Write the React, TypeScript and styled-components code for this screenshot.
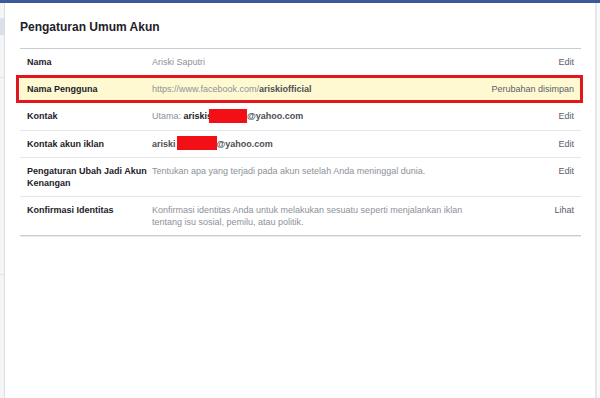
import React from "react";
import styled, { createGlobalStyle } from "styled-components";

const GlobalStyle = createGlobalStyle`
  html, body {
    margin: 0;
    padding: 0;
    background: #ffffff;
  }
  body {
    font-family: "Liberation Sans", Arial, sans-serif;
  }
`;

const Page = styled("div")`
  display: flex;
  flex-direction: column;
  height: 398px;
  overflow: hidden;
`;

const TopBar = styled("div")`
  height: 3px;
  background-color: #3d5a98;
  flex-shrink: 0;
`;

const Body = styled("div")`
  display: flex;
  flex: 1;
`;

const SideNav = styled("div")`
  width: 4px;
  background-color: #f4f5f7;
  border-right: 1px solid #dcdee2;
  display: flex;
  flex-direction: column;
`;

const SideNavItem = styled("div")<{ $active?: boolean; $height: number }>`
  height: ${(p) => p.$height}px;
  background-color: ${(p) => (p.$active ? "#d9dfeb" : "transparent")};
  border-bottom: 1px solid ${(p) => (p.$active ? "transparent" : "#e2e4e8")};
`;

const Main = styled("main")`
  flex: 1;
  padding: 16px 14px 0 15px;
  background-color: #ffffff;
  border-right: 2px solid #e6e7ea;
`;

const RightGutter = styled("div")`
  width: 3px;
  background-color: #f9f9fa;
`;

const Title = styled("h2")`
  margin: 0;
  font-size: 12px;
  line-height: 16px;
  font-weight: bold;
  color: #1d2129;
  padding-bottom: 13px;
  border-bottom: 1px solid #c9cbcf;
`;

const SettingsList = styled("ul")`
  list-style: none;
  margin: 0;
  padding: 0;
  border-bottom: 1px solid #cbcdd1;
  box-shadow: 0 1px 0 #e9eaed;
`;

const SettingsRow = styled("li")<{ $saved?: boolean }>`
  position: relative;
  display: flex;
  align-items: flex-start;
  padding: 7px 7px;
  font-size: 9px;
  line-height: 12px;
  background-color: ${(p) => (p.$saved ? "#fff9d2" : "transparent")};

  &:not(:last-child) {
    border-bottom: 1px solid ${(p) => (p.$saved ? "transparent" : "#e5e6e9")};
  }

  /* Red annotation box around the saved row */
  ${(p) =>
    p.$saved &&
    `
    &::after {
      content: "";
      position: absolute;
      top: -1px;
      bottom: -1px;
      left: -4px;
      right: -2px;
      border: 3px solid #e3161e;
      pointer-events: none;
    }
  `}
`;

const Label = styled("div")`
  width: 122px;
  padding-right: 3px;
  flex-shrink: 0;
  font-weight: bold;
  color: #1d2129;
`;

const Value = styled("div")`
  width: 320px;
  color: #8d9199;
`;

const Strong = styled("span")<{ $tone?: "dark" | "mid" }>`
  font-weight: bold;
  color: ${(p) => (p.$tone === "mid" ? "#4b4f56" : "#1d2129")};
`;

const Redacted = styled("span")<{ $width: number; $shift?: number }>`
  display: inline-block;
  vertical-align: middle;
  width: ${(p) => p.$width}px;
  height: 14px;
  margin-left: ${(p) => p.$shift || 0}px;
  margin-top: -2px;
  background-color: #f20f16;
`;

const Action = styled("div")`
  margin-left: auto;
  color: #5b6068;
  white-space: nowrap;
`;

const App: React.FC = () => {
  return (
    <React.Fragment>
      <GlobalStyle />
      <Page>
        <TopBar />
        <Body>
          <SideNav>
            <SideNavItem $height={15} />
            <SideNavItem $height={15} $active />
            <SideNavItem $height={42} />
            <SideNavItem $height={196} />
          </SideNav>
          <Main>
            <Title>Pengaturan Umum Akun</Title>
            <SettingsList>
              <SettingsRow>
                <Label>Nama</Label>
                <Value>Ariski Saputri</Value>
                <Action>Edit</Action>
              </SettingsRow>
              <SettingsRow $saved>
                <Label>Nama Pengguna</Label>
                <Value>
                  https://www.facebook.com/<Strong $tone="mid">ariskiofficial</Strong>
                </Value>
                <Action>Perubahan disimpan</Action>
              </SettingsRow>
              <SettingsRow>
                <Label>Kontak</Label>
                <Value>
                  Utama: <Strong>ariskis</Strong>
                  <Redacted $width={38} $shift={-3} />
                  <Strong $tone="mid">@yahoo.com</Strong>
                </Value>
                <Action>Edit</Action>
              </SettingsRow>
              <SettingsRow>
                <Label>Kontak akun iklan</Label>
                <Value>
                  <Strong $tone="mid">ariski</Strong>
                  <Redacted $width={40} $shift={1} />
                  <Strong $tone="mid">@yahoo.com</Strong>
                </Value>
                <Action>Edit</Action>
              </SettingsRow>
              <SettingsRow>
                <Label>Pengaturan Ubah Jadi Akun Kenangan</Label>
                <Value>
                  Tentukan apa yang terjadi pada akun setelah Anda meninggal
                  dunia.
                </Value>
                <Action>Edit</Action>
              </SettingsRow>
              <SettingsRow>
                <Label>Konfirmasi Identitas</Label>
                <Value>
                  Konfirmasi identitas Anda untuk melakukan sesuatu seperti
                  menjalankan iklan tentang isu sosial, pemilu, atau politik.
                </Value>
                <Action>Lihat</Action>
              </SettingsRow>
            </SettingsList>
          </Main>
          <RightGutter />
        </Body>
      </Page>
    </React.Fragment>
  );
};

export default App;
